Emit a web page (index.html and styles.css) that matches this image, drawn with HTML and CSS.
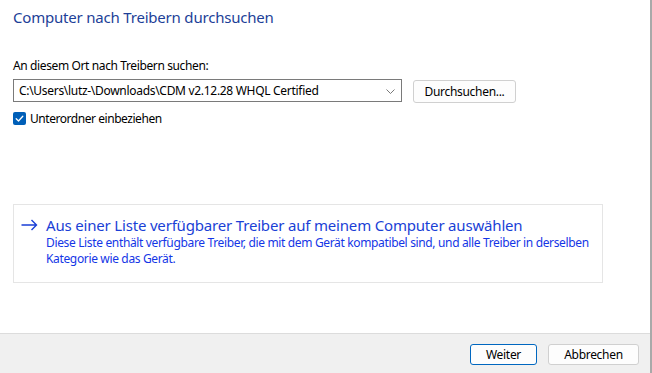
FILE: index.html
```html
<!DOCTYPE html>
<html lang="de">
<head>
<meta charset="utf-8">
<title>Computer nach Treibern durchsuchen</title>
<link rel="stylesheet" href="styles.css">
</head>
<body>
<div class="window">
  <main class="content">
    <h1 class="title">Computer nach Treibern durchsuchen</h1>
    <label class="field-label" for="path">An diesem Ort nach Treibern suchen:</label>
    <div class="path-row">
      <div class="combo" id="path">
        <span class="combo-text">C:\Users\lutz-\Downloads\CDM v2.12.28 WHQL Certified</span>
        <svg class="chevron" width="9" height="5" viewBox="0 0 9 5"><path d="M0.5 0.5 L4.5 4.5 L8.5 0.5" fill="none" stroke="#6a6a6a" stroke-width="0.9"/></svg>
      </div>
      <button class="btn browse">Durchsuchen...</button>
    </div>
    <div class="check-row">
      <span class="checkbox">
        <svg width="13" height="13" viewBox="0 0 13 13"><path d="M3.2 6.8 L5.5 9 L9.8 4.3" fill="none" stroke="#ffffff" stroke-width="1.3" stroke-linecap="round" stroke-linejoin="round"/></svg>
      </span>
      <span class="check-label">Unterordner einbeziehen</span>
    </div>
    <div class="link-box">
      <div class="link-head">
        <svg class="arrow" width="17" height="12" viewBox="0 0 17 12"><path d="M0.5 6 H15.5 M10.5 1 L15.5 6 L10.5 11" fill="none" stroke="#1a3fd6" stroke-width="1.4"/></svg>
        <span class="link-title">Aus einer Liste verfügbarer Treiber auf meinem Computer auswählen</span>
      </div>
      <p class="link-desc">Diese Liste enthält verfügbare Treiber, die mit dem Gerät kompatibel sind, und alle Treiber in derselben Kategorie wie das Gerät.</p>
    </div>
  </main>
  <footer class="footer">
    <button class="btn primary">Weiter</button>
    <button class="btn cancel">Abbrechen</button>
  </footer>
</div>
</body>
</html>
```

FILE: styles.css
```css
html, body {
  margin: 0;
  padding: 0;
  background: #ffffff;
}
body {
  width: 652px;
  height: 373px;
  overflow: hidden;
  font-family: "Noto Sans", "Open Sans", sans-serif;
  color: #000000;
}
.window {
  box-sizing: border-box;
  width: 652px;
  height: 373px;
  display: flex;
  flex-direction: column;
  border-right: 2px solid #a9a9a9;
}
.content {
  flex: 1;
  display: flex;
  flex-direction: column;
  padding: 7px 0 0 13px;
}
.title {
  margin: 0;
  font-size: 15px;
  font-weight: 400;
  line-height: 20px;
  letter-spacing: -0.2px;
  color: #1d3f98;
}
.field-label {
  margin-top: 31px;
  font-size: 12px;
  line-height: 16px;
  letter-spacing: -0.38px;
}
.path-row {
  display: flex;
  align-items: flex-start;
  margin-top: 5px;
}
.combo {
  box-sizing: border-box;
  width: 389px;
  height: 23px;
  border: 1px solid #7a7a7a;
  display: flex;
  align-items: center;
  justify-content: space-between;
  padding: 0 6px 0 5px;
  font-size: 12px;
  letter-spacing: -0.3px;
}
.chevron {
  margin-top: 1px;
}
.btn {
  box-sizing: border-box;
  font-family: inherit;
  font-size: 12px;
  letter-spacing: -0.3px;
  color: #000;
  background: #fdfdfd;
  border: 1px solid #d0d0d0;
  border-radius: 3px;
  padding: 0;
}
.browse {
  margin-left: 11px;
  margin-top: 1px;
  width: 103px;
  height: 23px;
}
.check-row {
  display: flex;
  align-items: center;
  margin-top: 7px;
  font-size: 12px;
  letter-spacing: -0.45px;
}
.checkbox {
  width: 13px;
  height: 13px;
  border-radius: 2px;
  background: #005fb8;
  display: flex;
}
.check-label {
  margin-left: 4px;
}
.link-box {
  box-sizing: border-box;
  margin-top: 77px;
  width: 590px;
  height: 79px;
  border: 1px solid #e5e5e5;
  padding: 10px 0 0 7px;
}
.link-head {
  display: flex;
  align-items: center;
}
.arrow {
  flex: none;
}
.link-title {
  margin-left: 8px;
  font-size: 15px;
  line-height: 20px;
  letter-spacing: -0.18px;
  color: #1a3fd6;
}
.link-desc {
  margin: 0 0 0 25px;
  width: 560px;
  font-size: 12px;
  line-height: 16px;
  letter-spacing: -0.35px;
  color: #1436e6;
}
.footer {
  box-sizing: border-box;
  height: 40px;
  background: #f0f0f0;
  border-top: 1px solid #dcdcdc;
  display: flex;
  justify-content: flex-end;
  align-items: flex-start;
  gap: 11px;
  padding: 10px 11px 0 0;
}
.primary {
  width: 67px;
  height: 21px;
  border: 1px solid #0067c0;
}
.cancel {
  width: 91px;
  height: 21px;
}
```
